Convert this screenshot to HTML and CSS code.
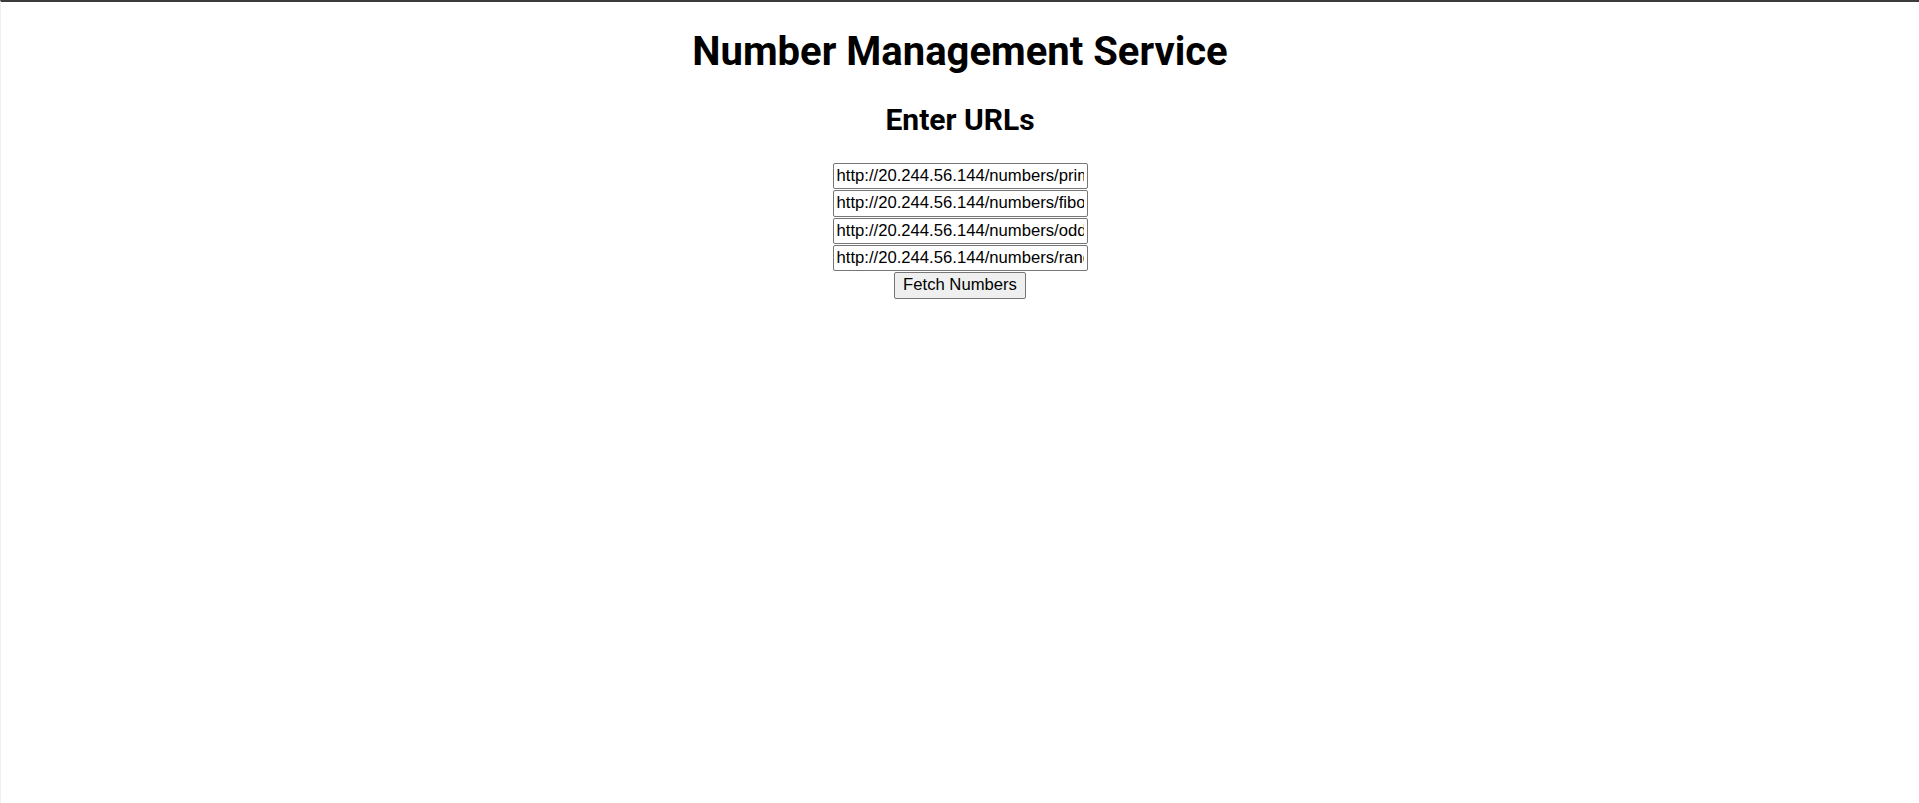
FILE: index.html
```html
<!DOCTYPE html>
<html lang="en">
<head>
<meta charset="utf-8">
<title>Number Management Service</title>
<link rel="stylesheet" href="styles.css">
</head>
<body>
<div class="app">
  <h1 class="title">Number Management Service</h1>
  <h2 class="subtitle">Enter URLs</h2>
  <div class="url-form">
    <input class="url-input" type="text" value="http://20.244.56.144/numbers/primes">
    <input class="url-input" type="text" value="http://20.244.56.144/numbers/fibo">
    <input class="url-input" type="text" value="http://20.244.56.144/numbers/odd">
    <input class="url-input" type="text" value="http://20.244.56.144/numbers/rand">
    <button class="fetch-btn" type="button">Fetch Numbers</button>
  </div>
</div>
</body>
</html>
```

FILE: styles.css
```css
html {
  box-sizing: border-box;
  min-height: 100%;
  border-top: 2px solid #3c3c3c;
  border-left: 1px solid #f0f0f0;
  background: #fff;
}
body {
  margin: 0;
  font-family: Roboto, "Liberation Sans", Arial, sans-serif;
  color: #000;
}
.app {
  display: flex;
  flex-direction: column;
  align-items: center;
  padding-top: 1px;
}
.title {
  font-size: 40px;
  font-weight: 700;
  line-height: 47px;
  margin: 25px 0 27px;
}
.subtitle {
  font-size: 30px;
  font-weight: 700;
  line-height: 35px;
  margin: 0 0 26px;
}
.url-form {
  display: flex;
  flex-direction: column;
  align-items: center;
  gap: 1px;
}
.url-input {
  box-sizing: border-box;
  width: 255px;
  height: 26.3px;
  padding: 1px 3px;
  border: 1px solid #767676;
  border-radius: 2px;
  font-family: "Liberation Sans", Arial, sans-serif;
  font-size: 16.67px;
  color: #000;
  background: #fff;
}
.fetch-btn {
  box-sizing: border-box;
  height: 26.6px;
  padding: 1px 8px;
  border: 1px solid #767676;
  border-radius: 2px;
  background: #efefef;
  font-family: "Liberation Sans", Arial, sans-serif;
  font-size: 16.67px;
  color: #000;
}
```
